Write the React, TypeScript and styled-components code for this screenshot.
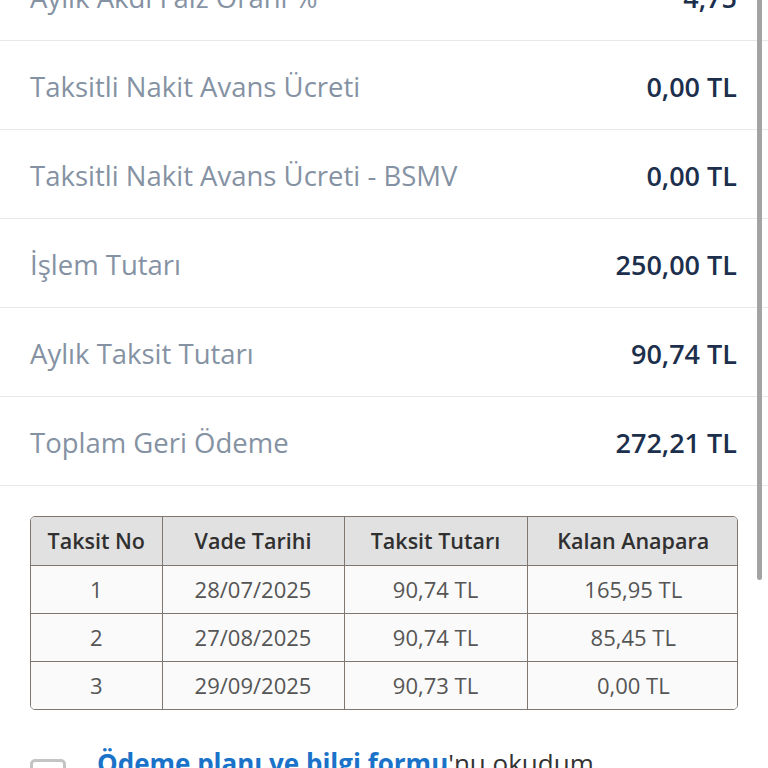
import React from "react";
import styled, { createGlobalStyle } from "styled-components";

const Global = createGlobalStyle`
  html, body { margin: 0; padding: 0; background: #ffffff; overflow: hidden; }
  body { font-family: "Open Sans", "Noto Sans", sans-serif; }
  * { box-sizing: border-box; }
`;

const Page = styled.div`
  position: relative;
  width: 768px;
  height: 768px;
  overflow: hidden;
  background: #ffffff;
`;

const Content = styled.div`
  margin-top: -48px;
  display: flex;
  flex-direction: column;
`;

const Row = styled.div`
  height: 89px;
  display: flex;
  align-items: center;
  justify-content: space-between;
  padding: 2px 31px 0 30px;
  border-bottom: 1px solid #e6e8eb;
`;

const Label = styled.span`
  font-size: 27.5px;
  color: #8592a3;
  font-weight: 400;
`;

const Value = styled.span`
  font-size: 27px;
  color: #1c2f4c;
  font-weight: 600;
`;

const TableWrap = styled.div`
  margin: 30px 30px 0 30px;
  border: 1px solid #7f7670;
  border-radius: 5px;
  overflow: hidden;
`;

const Table = styled.table`
  width: 100%;
  border-collapse: collapse;
  table-layout: fixed;
`;

const Th = styled.th`
  height: 48px;
  background: #e1e1e1;
  color: #303030;
  font-size: 21.5px;
  font-weight: 600;
  text-align: center;
  border-right: 1px solid #7f7670;
  border-bottom: 1px solid #7f7670;
  padding: 0;
  &:last-child { border-right: none; }
`;

const Td = styled.td`
  height: 48px;
  background: #fafafa;
  color: #555555;
  font-size: 22px;
  font-weight: 400;
  text-align: center;
  border-right: 1px solid #7f7670;
  border-bottom: 1px solid #7f7670;
  padding: 0;
  &:last-child { border-right: none; }
  tr:last-child > & { border-bottom: none; }
`;

const Consent = styled.div`
  margin-top: 36px;
  display: flex;
  align-items: flex-start;
  gap: 31px;
  padding-left: 30px;
`;

const Box = styled.div`
  width: 36px;
  height: 36px;
  margin-top: 13px;
  border: 3px solid #c4c4c4;
  border-radius: 5px;
  background: #fff;
  flex-shrink: 0;
`;

const ConsentText = styled.div`
  font-size: 26px;
  color: #333;
  line-height: 34px;
`;

const LinkText = styled.span`
  color: #1a73c8;
  font-weight: 700;
  text-decoration: underline;
`;

const Scrollbar = styled.div`
  position: absolute;
  top: 0;
  left: 757px;
  width: 5px;
  height: 580px;
  background: #a3a3a3;
  border-radius: 0 0 3px 3px;
`;

const rows: [string, string][] = [
  ["Aylık Akdi Faiz Oranı %", "4,75"],
  ["Taksitli Nakit Avans Ücreti", "0,00 TL"],
  ["Taksitli Nakit Avans Ücreti - BSMV", "0,00 TL"],
  ["İşlem Tutarı", "250,00 TL"],
  ["Aylık Taksit Tutarı", "90,74 TL"],
  ["Toplam Geri Ödeme", "272,21 TL"],
];

const plan = [
  ["1", "28/07/2025", "90,74 TL", "165,95 TL"],
  ["2", "27/08/2025", "90,74 TL", "85,45 TL"],
  ["3", "29/09/2025", "90,73 TL", "0,00 TL"],
];

const widths = [131, 182, 183, 212];

export default function App() {
  return (
    <Page>
      <Global />
      <Content>
        {rows.map(([l, v]) => (
          <Row key={l}>
            <Label>{l}</Label>
            <Value>{v}</Value>
          </Row>
        ))}
        <TableWrap>
          <Table>
            <colgroup>
              {widths.map((w, i) => (
                <col key={i} style={{ width: w }} />
              ))}
            </colgroup>
            <thead>
              <tr>
                <Th>Taksit No</Th>
                <Th>Vade Tarihi</Th>
                <Th>Taksit Tutarı</Th>
                <Th>Kalan Anapara</Th>
              </tr>
            </thead>
            <tbody>
              {plan.map((r) => (
                <tr key={r[0]}>
                  {r.map((c, i) => (
                    <Td key={i}>{c}</Td>
                  ))}
                </tr>
              ))}
            </tbody>
          </Table>
        </TableWrap>
        <Consent>
          <Box />
          <ConsentText>
            <LinkText>Ödeme planı ve bilgi formu</LinkText>'nu okudum
          </ConsentText>
        </Consent>
      </Content>
      <Scrollbar />
    </Page>
  );
}
